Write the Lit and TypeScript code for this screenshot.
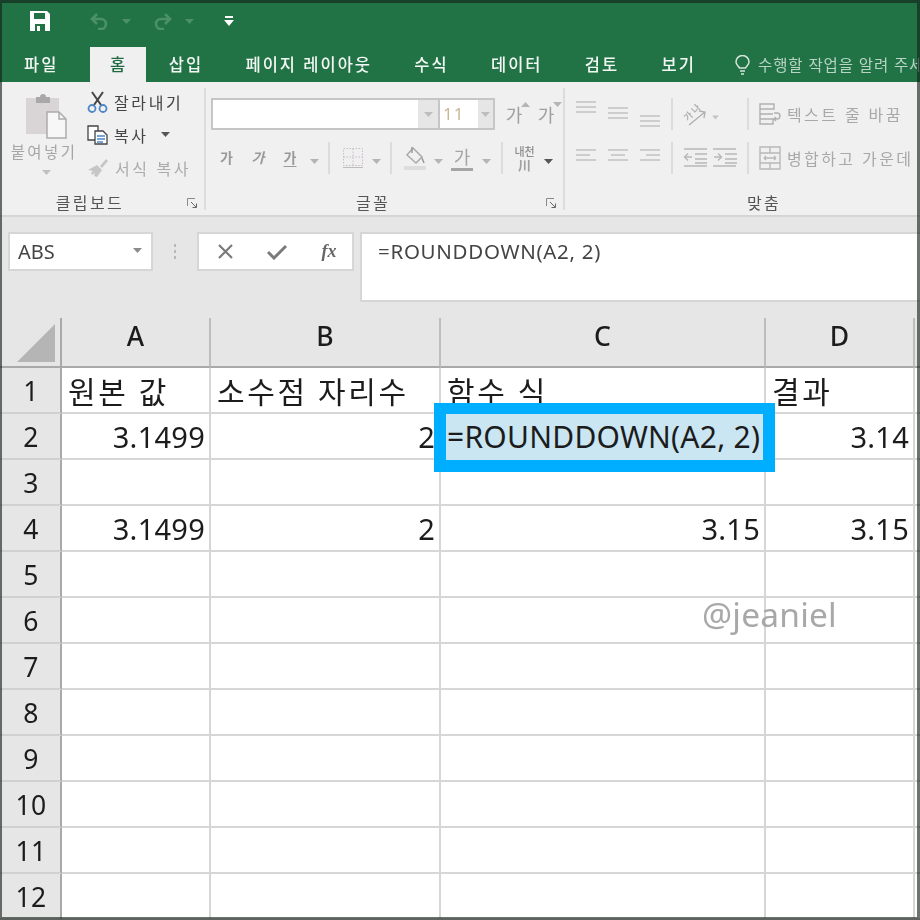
import { LitElement, html, css, svg } from "lit";
import { customElement } from "lit/decorators.js";

const caret = (c = "#b4b4b4", w = 9) => html`<svg width=${w} height="5" viewBox="0 0 9 5"><path d="M0 0h9L4.5 5z" fill=${c}/></svg>`;
const launcher = html`<svg width="11" height="11" viewBox="0 0 11 11" fill="none" stroke="#8a8a8a"><path d="M.5 8V.5H8"/><path d="M4 4l5 5M9.5 5.5v4h-4" stroke="#666"/></svg>`;
const lines = (ys: number[], xs: [number, number][]) => html`<svg width="24" height="32" viewBox="0 0 24 32" stroke="#bdbdbd" stroke-width="1.4">${ys.map((y, i) => svg`<path d="M${xs[i][0]} ${y}H${xs[i][1]}"/>`)}</svg>`;
const sep = html`<span class="sep"></span>`;

const ROWS: Record<number, string[]> = {
  1: ["원본 값", "소수점 자리수", "함수 식", "결과"],
  2: ["3.1499", "2", "=ROUNDDOWN(A2, 2)", "3.14"],
  4: ["3.1499", "2", "3.15", "3.15"],
};

@customElement("app-root")
export class AppRoot extends LitElement {
  static styles = css`
    :host { display: block; width: 920px; height: 920px; overflow: hidden; font-family: "Noto Sans", "Noto Sans CJK KR", sans-serif; }
    .app { position: relative; width: 920px; height: 920px; overflow: hidden; background: #fff; display: flex; flex-direction: column; }
    .frame { position: absolute; inset: 0; border: solid rgba(20, 30, 25, .62); border-width: 3px 3px 3px 2px; pointer-events: none; z-index: 5; }
    .soft { filter: blur(.35px); }
    .title { background: #217346; height: 82px; flex: none; display: flex; flex-direction: column; }
    .qat { height: 47px; display: grid; grid-template-columns: 22px 37px 24px 28px 10px 24px 30px 13px 24px; padding-left: 29px; align-items: center; justify-items: center; box-sizing: border-box; padding-bottom: 5px; }
    .tabs { display: flex; height: 35px; padding-left: 2.85px; align-items: stretch; font-size: 16.5px; font-weight: 500; color: #f2f7f4; letter-spacing: 2px; white-space: nowrap; }
    .tab { padding: 0 21.15px; line-height: 35px; }
    .tab.active { background: #f0f0f0; color: #1f6b41; padding: 0 18.5px 0 20px; margin: 0 2px 0 10.5px; }
    .search { display: flex; align-items: center; gap: 8px; padding-left: 18px; color: #b9d4c5; font-weight: 400; letter-spacing: .9px; font-size: 15.5px; }
    .ribbon { background: #f0f0f0; height: 135px; flex: none; border-bottom: 2px solid #d5d5d5; box-sizing: border-box; display: flex; font-size: 16px; color: #444; white-space: nowrap; }
    .group { display: flex; flex-direction: column; flex: none; border-right: 2px solid #dcdcdc; box-sizing: border-box; margin: 6px 0 5px; }
    .g-clip { width: 206px; padding-left: 8px; }
    .g-font { width: 359px; padding-left: 5px; }
    .g-align { flex: 1; border: 0; padding-left: 5px; }
    .body { flex: 1; min-height: 0; }
    .label { height: 26px; margin-bottom: -5px; display: flex; align-items: center; justify-content: center; position: relative; font-size: 16px; color: #555; letter-spacing: 2.4px; }
    .g-clip .label { padding-right: 32px; }
    .g-font .label { padding-right: 28px; }
    .g-align .label { padding-left: 38px; }
    .launch { position: absolute; right: 6px; bottom: 6px; display: flex; }
    .clip-body { display: flex; }
    .paste { width: 72px; display: flex; flex-direction: column; align-items: center; padding-top: 5px; margin-right: 7px; color: #a6a6a6; letter-spacing: 2.4px; font-size: 15.5px; line-height: 22px; }
    .paste svg { margin-left: 4px; }
    .paste .t { margin-top: 2px; }
    .paste-caret { margin-top: 7px; display: flex; }
    .clip-rows { margin-top: -3px; display: grid; grid-auto-rows: 33px; }
    .clip-row { display: flex; align-items: center; gap: 6px; letter-spacing: 2.6px; }
    .clip-row svg:first-child { flex: none; }
    .clip-row.off { color: #ababab; }
    .clip-row .car { margin-left: 6px; display: flex; }
    .font-top { display: flex; margin-top: 10px; height: 32px; align-items: stretch; }
    .combo { width: 284px; border: 2px solid #c6c6c6; box-sizing: border-box; display: grid; grid-template-columns: 205px 20px 2px 38px 1fr; background: #fff; }
    .dd { background: #e6e6e6; display: flex; align-items: center; justify-content: center; }
    .gap2 { background: #c6c6c6; }
    .size { color: #c9b79b; font-size: 17px; padding-left: 3px; line-height: 28px; letter-spacing: 1px; }
    .grow { font-size: 18px; color: #a0a0a0; display: flex; align-items: center; justify-content: center; width: 32px; position: relative; line-height: 1; padding-top: 2px; box-sizing: border-box; }
    .grow.first { margin-left: 3px; }
    .tri { position: absolute; top: 4px; right: 0; display: flex; }
    .row2 { display: grid; height: 32px; align-items: center; justify-items: center; margin-top: 12px; grid-template-columns: 31px 32px 32px 16px 14px 34px 13px 16px 32px 15px 32px 16px 16px 29px 18px; }
    .sep { width: 2px; height: 32px; background: #dcdcdc; display: block; }
    .ga { color: #9a9a9a; font-size: 14px; font-weight: 700; line-height: 20px; }
    .ga.i { font-style: italic; }
    .ga.u { text-decoration: underline; text-underline-offset: 3px; }
    .big-ga { font-size: 18px; color: #a5a5a5; border-bottom: 3px solid #a5a5a5; line-height: 22px; padding: 0 3px; }
    .phon { font-size: 13px; line-height: 13px; color: #a0a0a0; text-align: center; font-weight: 700; }
    .phon b { display: block; font-size: 11px; line-height: 14px; letter-spacing: 0; font-weight: 500; color: #8e8e8e; }
    .a-row { display: grid; height: 32px; align-items: center; justify-items: center; color: #a8a8a8; letter-spacing: 2.4px; }
    .a-top { margin-top: 10px; grid-template-columns: 32px 32px 32px 12px 34px 6px 24px 12px 32px auto; }
    .a-bot { margin-top: 12px; grid-template-columns: 32px 32px 32px 12px 34px 26px 4px 12px 32px auto; }
    .a-row .txt { justify-self: start; padding-left: 1px; }
    .orient { overflow: visible; }
    .formula { height: 101px; flex: none; background: #e6e6e6; display: flex; padding: 15px 0 0 8px; box-sizing: border-box; align-items: flex-start; }
    .box { background: #fff; border: 2px solid #d6d6d6; box-sizing: border-box; height: 39px; display: flex; align-items: center; }
    .name { width: 145px; justify-content: space-between; padding: 0 8px 3px 8px; font-size: 20px; color: #444; }
    .name span { line-height: 36px; margin-top: 3px; }
    .dots { width: 44px; display: flex; justify-content: center; padding-top: 12px; }
    .fx { width: 157px; display: grid; grid-template-columns: 52px 52px 52px; justify-items: center; }
    .fx .f { font-family: "Liberation Serif", serif; font-style: italic; font-weight: 700; color: #666; font-size: 18px; }
    .input { flex: 1; margin-left: 6px; height: 70px; background: #fff; border: solid #d6d6d6; border-width: 2px 0 2px 2px; box-sizing: border-box; padding: 3px 0 0 16px; font-size: 20.5px; letter-spacing: .7px; line-height: 29px; color: #444; }
    .sheet { flex: 1; display: grid; grid-template-columns: 62px 149px 230px 325px 149px 1fr; grid-template-rows: 50px repeat(12, 46px); font-size: 30px; letter-spacing: .25px; color: #1c1c1c; white-space: nowrap; }
    .corner, .ch, .rh { background: #e6e6e6; box-sizing: border-box; display: flex; align-items: center; justify-content: center; color: #1c1c1c; font-size: 26.5px; font-weight: 500; }
    .corner { border: solid #a9a9a9; border-width: 0 2px 2px 0; align-items: flex-end; justify-content: flex-end; padding: 0 5px 4px 0; }
    .ch { border: solid #a9a9a9; border-width: 0 2px 2px 0; padding-bottom: 12px; border-right-color: #bdbdbd; }
    .rh { border: solid #d0d0d0; border-width: 0 2px 2px 0; border-right-color: #a9a9a9; padding: 2px 0 0 2px; font-weight: 400; }
    .c { box-sizing: border-box; border: solid #d6d6d6; border-width: 0 2px 2px 0; display: flex; align-items: center; padding: 0 5px 0 6px; min-width: 0; }
    .c.r { justify-content: flex-end; font-size: 29px; padding-right: 4px; }
    .c span { position: relative; z-index: 1; }
    .c.ko { letter-spacing: 2.6px; }
    .c.sel { position: relative; z-index: 2; overflow: visible; }
    .hl { position: absolute; top: -11px; left: -7px; right: -11px; bottom: -14px; border: solid #00aeff; border-width: 11px 12px 12px 12px; background: #c9e6f2; }
    .mark { position: absolute; left: 702px; top: 591px; font-size: 33.5px; color: #a8a8a8; letter-spacing: .2px; z-index: 3; }
  `;

  render() {
    const tabs = ["파일", "홈", "삽입", "페이지 레이아웃", "수식", "데이터", "검토", "보기"];
    return html`<div class="app">
      <div class="soft title">
        <div class="qat">
          <svg width="22" height="22" viewBox="0 0 22 22"><path d="M1 1h17l3 3v17H1z" fill="#fff"/><path d="M5 3h11v6H5zM6 14h10v7H6z" fill="#217346"/><path d="M8 16h3v5H8z" fill="#fff"/></svg>
          <span></span>
          <svg width="22" height="18" viewBox="0 0 22 18" fill="none" stroke="#4c9069" stroke-width="2.6"><path d="M8 2L3 7l5 5M3 7h9a5 5 0 0 1 0 10h-3"/></svg>
          ${caret("#4c9069")}
          <span></span>
          <svg width="22" height="18" viewBox="0 0 22 18" fill="none" stroke="#4c9069" stroke-width="2.6"><path d="M14 2l5 5-5 5M19 7h-9a5 5 0 0 0 0 10h3"/></svg>
          ${caret("#4c9069")}
          <span></span>
          <svg width="10" height="11" viewBox="0 0 10 11" fill="#fff"><path d="M1 0h8v2H1zM0 4h10L5 10z"/></svg>
        </div>
        <div class="tabs">
          ${tabs.map((t) => html`<div class="tab ${t === "홈" ? "active" : ""}">${t}</div>`)}
          <div class="search">
            <svg width="15" height="20" viewBox="0 0 15 20" fill="none" stroke="#d5e5dc" stroke-width="1.5"><path d="M4.5 13C3 11 1 9.500 1 7a6.500 6.500 0 0 1 13 0c0 2.500-2 4-3.500 6zM5 16h5M6 19h3"/></svg>
            <span>수행할 작업을 알려 주세요</span>
          </div>
        </div>
      </div>

      <div class="soft ribbon">
        <div class="group g-clip">
          <div class="body clip-body">
            <div class="paste">
              <svg width="42" height="46" viewBox="0 0 42 46"><path d="M1 5h33v36H1z" fill="#d9d5d7"/><path d="M11 4h4a3 3 0 0 1 6 0h4v6H11z" fill="#a9a9a9"/><path d="M22 19h12l7 7v19H22z" fill="#f7f7f7" stroke="#acacac" stroke-width="1.500"/><path d="M34 19v7h7" fill="none" stroke="#acacac" stroke-width="1.500"/></svg>
              <span class="t">붙여넣기</span>
              <span class="paste-caret">${caret("#c0c0c0")}</span>
            </div>
            <div class="clip-rows">
              <div class="clip-row">
                <svg width="21" height="22" viewBox="0 0 21 22" fill="none"><path d="M5 1l9 13M16 1L7 14" stroke="#444" stroke-width="2"/><circle cx="5" cy="17.500" r="3.500" stroke="#4a86c5" stroke-width="1.800"/><circle cx="16" cy="17.500" r="3.500" stroke="#4a86c5" stroke-width="1.800"/></svg>
                <span>잘라내기</span>
              </div>
              <div class="clip-row">
                <svg width="21" height="20" viewBox="0 0 21 20" fill="#fff" stroke="#444" stroke-width="1.300"><path d="M1 1h10v14H1z"/><path d="M8 6h8l4 4v9H8z"/><path d="M10 11h8M10 14h8M10 17h6" stroke="#4a86c5"/></svg>
                <span>복사</span>
                <span class="car">${caret("#555")}</span>
              </div>
              <div class="clip-row off">
                <svg width="22" height="20" viewBox="0 0 22 20" fill="#c6c6c6"><path d="M13 8l6-7 2 2-6 7zM1 12l9-5 5 5-5 7-3-1 1-3-3 2-1-2 2-2z"/></svg>
                <span>서식 복사</span>
              </div>
            </div>
          </div>
          <div class="label">클립보드<span class="launch">${launcher}</span></div>
        </div>

        <div class="group g-font">
          <div class="body">
            <div class="font-top">
              <div class="combo">
                <span></span><span class="dd">${caret("#bdbdbd")}</span><span class="gap2"></span>
                <span class="size">11</span><span class="dd">${caret("#bdbdbd")}</span>
              </div>
              <span class="grow first">가<span class="tri"><svg width="9" height="5" viewBox="0 0 9 5"><path d="M0 5h9L4.500 0z" fill="#b4b4b4"/></svg></span></span>
              <span class="grow">가<span class="tri">${caret()}</span></span>
            </div>
            <div class="row2">
              <span class="ga">가</span><span class="ga i">가</span><span class="ga u">가</span><span>${caret()}</span>${sep}
              <svg width="20" height="20" viewBox="0 0 20 20" fill="none" stroke="#c7bcc7" stroke-dasharray="1.500 1.500"><path d="M.5.500h19v17H.5zM10 .5v17M.5 9h19"/><path d="M0 19.500h20" stroke="#bcbcbc" stroke-dasharray="none"/></svg>
              <span>${caret()}</span>${sep}
              <svg width="24" height="24" viewBox="0 0 24 24" fill="none"><path d="M10 2l9 9-6 6-9-8z" stroke="#aaa" stroke-width="1.500"/><path d="M9 1v6M19 12l2 5" stroke="#999" stroke-width="1.500"/><path d="M1 20h22v4H1z" fill="#ddd"/></svg>
              <span>${caret()}</span>
              <span class="big-ga">가</span>
              <span>${caret()}</span>${sep}
              <span class="phon"><b>내천</b>川</span>
              <span>${caret("#555")}</span>
            </div>
          </div>
          <div class="label">글꼴<span class="launch">${launcher}</span></div>
        </div>

        <div class="group g-align">
          <div class="body">
            <div class="a-row a-top">
              ${lines([4, 9, 14], [[2, 22], [2, 22], [2, 22]])}
              ${lines([10, 15, 20], [[2, 22], [2, 22], [2, 22]])}
              ${lines([18, 23, 28], [[2, 22], [2, 22], [2, 22]])}
              ${sep}
              <svg class="orient" width="26" height="26" viewBox="0 0 26 26" fill="none" stroke="#b0b0b0" stroke-width="1.400"><text transform="rotate(-45 10 12)" x="1" y="15" font-size="9" fill="#b0b0b0" stroke="none" font-weight="700">가나</text><path d="M7 24L23 11M17 10l6 1-1 6"/></svg>
              <span>${caret("#c4c4c4", 7)}</span>
              <span></span>
              ${sep}
              <svg width="22" height="24" viewBox="0 0 22 24" fill="none" stroke="#b0b0b0" stroke-width="1.400"><path d="M1 2h14v5H1zM1 7v15h13v-5H1v-5h13M15 11h3a2.500 2.500 0 0 1 0 6h-3M17 15l-2 2 2 2"/></svg>
              <span class="txt">텍스트 줄 바꿈</span>
            </div>
            <div class="a-row a-bot">
              ${lines([8, 13, 18], [[2, 22], [2, 16], [2, 22]])}
              ${lines([8, 13, 18], [[2, 22], [5, 19], [2, 22]])}
              ${lines([8, 13, 18], [[2, 22], [8, 22], [2, 22]])}
              ${sep}
              <svg width="24" height="20" viewBox="0 0 24 20" fill="none" stroke="#b8b8b8" stroke-width="1.400"><path d="M1 1h23M12 6h12M12 11h12M1 18h23M12 15h12M9 9H2M5 5.500L1.500 9 5 12.500"/></svg>
              <svg width="24" height="20" viewBox="0 0 24 20" fill="none" stroke="#b8b8b8" stroke-width="1.400"><path d="M0 1h23M12 6h12M12 11h12M0 18h23M12 15h12M1 9h7M5 5.500L8.500 9 5 12.500"/></svg>
              <span></span>
              ${sep}
              <svg width="22" height="24" viewBox="0 0 22 24" fill="none" stroke="#b8b8b8" stroke-width="1.400"><path d="M1 1h20v22H1zM1 7h20M1 17h20M11 1v6M11 17v6M5 12h12M5 12l2-2M5 12l2 2M17 12l-2-2M17 12l-2 2"/></svg>
              <span class="txt">병합하고 가운데</span>
            </div>
          </div>
          <div class="label align-label">맞춤</div>
        </div>
      </div>

      <div class="soft formula">
        <div class="box name"><span>ABS</span>${caret("#8c8c8c", 11)}</div>
        <div class="dots"><svg width="4" height="16" viewBox="0 0 4 16" fill="#b9b9b9"><path d="M1 0h2v3H1zM1 6h2v3H1zM1 12h2v3H1z"/></svg></div>
        <div class="box fx">
          <svg width="15" height="15" viewBox="0 0 15 15" fill="none" stroke="#7a7a7a" stroke-width="2.200"><path d="M1 1l13 13M14 1L1 14"/></svg>
          <svg width="20" height="16" viewBox="0 0 20 16" fill="none" stroke="#7a7a7a" stroke-width="3"><path d="M1 8l6 6L19 2"/></svg>
          <span class="f">fx</span>
        </div>
        <div class="input">=ROUNDDOWN(A2, 2)</div>
      </div>

      <div class="soft sheet">
        <div class="corner"><svg width="38" height="38" viewBox="0 0 38 38"><path d="M38 0v38H0z" fill="#b5b5b5"/></svg></div>
        ${["A", "B", "C", "D", ""].map((l) => html`<div class="ch">${l}</div>`)}
        ${Array.from({ length: 12 }, (_, i) => i + 1).map((n) => html`
          <div class="rh">${n}</div>
          ${[0, 1, 2, 3].map((k) => {
            const v = ROWS[n]?.[k] ?? "";
            const sel = n === 2 && k === 2;
            const right = n !== 1 && !sel;
            return html`<div class="c ${right ? "r" : ""} ${sel ? "sel" : ""} ${n === 1 ? "ko" : ""}">${sel ? html`<i class="hl"></i>` : ""}<span>${v}</span></div>`;
          })}
          <div class="c"></div>
        `)}
      </div>
      <div class="mark">@jeaniel</div>
      <div class="frame"></div>
    </div>`;
  }
}
